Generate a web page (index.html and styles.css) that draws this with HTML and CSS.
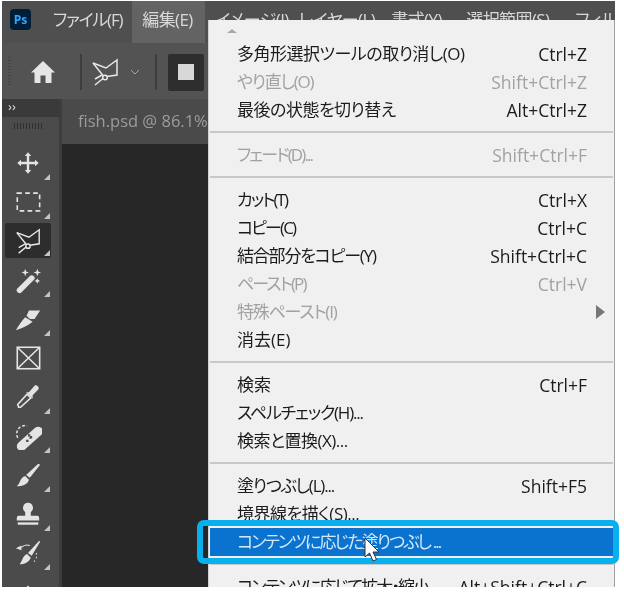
FILE: index.html
```html
<!DOCTYPE html>
<html lang="ja">
<head>
    <meta charset="UTF-8">
    <title>Photoshop 編集メニュー</title>
    <link rel="stylesheet" href="styles.css">
</head>
<body>
<div class="app">
    <div class="menubar">
        <div class="logo">Ps</div>
        <span class="top-item first">ファイル(F)</span>
        <span class="top-item current">編集(E)</span>
        <span class="top-item w-image">イメージ(I)</span>
        <span class="top-item w-layer">レイヤー(L)</span>
        <span class="top-item w-type">書式(Y)</span>
        <span class="top-item w-select">選択範囲(S)</span>
        <span class="top-item">フィルター(T)</span>
    </div>

    <div class="options">
        <div class="grip"></div>
        <svg class="home" viewBox="0 0 24 22"><path d="M12 0 24 11.500H20.500V22H14.500V14.500H9.500V22H3.500V11.500H0Z" fill="#e6e6e6"/></svg>
        <div class="opt-sep"></div>
        <svg class="opt-lasso" viewBox="0 0 30 30"><use href="#lasso"/></svg>
        <svg class="chevron" viewBox="0 0 10 6"><path d="M1 1 5 5 9 1" fill="none" stroke="#a8a8a8" stroke-width="1"/></svg>
        <div class="opt-sep second"></div>
        <div class="mode"><div class="mode-square"></div></div>
    </div>

    <div class="work">
        <div class="tools">
            <div class="tools-head">&rsaquo;&rsaquo;</div>
            <div class="tools-grip"></div>
            <div class="tool corner">
                <svg viewBox="0 0 30 30"><path d="M15 3.500 18.500 7.500H16.300V13.700H22.500V11.500L26.500 15 22.500 18.500V16.300H16.300V22.500H18.500L15 26.500 11.500 22.500H13.700V16.300H7.500V18.500L3.500 15 7.500 11.500V13.700H13.700V7.500H11.500Z" fill="#e4e4e4"/></svg>
            </div>
            <div class="tool corner">
                <svg viewBox="0 0 30 30"><rect x="3.500" y="5.500" width="24" height="19" fill="none" stroke="#e4e4e4" stroke-width="1.700" stroke-dasharray="5 3.500"/></svg>
            </div>
            <div class="tool corner selected">
                <svg viewBox="0 0 30 30">
                    <defs>
                        <g id="lasso" fill="none" stroke="#e8e8e8" stroke-width="1.500">
                            <path d="M3 6 16 11 27 3V18L17 19.500"/>
                            <path d="M3 6 13 18.500"/>
                            <circle cx="15" cy="20.500" r="2.300"/>
                            <path d="M13 21.500 5 28M12 18 5 22"/>
                        </g>
                    </defs>
                    <use href="#lasso"/>
                </svg>
            </div>
            <div class="tool corner">
                <svg viewBox="0 0 30 30" fill="#e4e4e4">
                    <path d="M6 26 19 13" stroke="#e4e4e4" stroke-width="6" stroke-linecap="round"/>
                    <path d="M12 3 13 6 16 7 13 8 12 11 11 8 8 7 11 6ZM25 3 26 6 29 7 26 8 25 11 24 8 21 7 24 6ZM25 13 26 15 28 16 26 17 25 19 24 17 22 16 24 15Z"/>
                </svg>
            </div>
            <div class="tool corner">
                <svg viewBox="0 0 30 30" fill="#e4e4e4"><path d="M16 6H28L22 15 17 15 13.500 11.500ZM12 13 20 18C14 23 8 25 2 27 5 22 8 17 12 13Z"/></svg>
            </div>
            <div class="tool">
                <svg viewBox="0 0 30 30" fill="none" stroke="#e4e4e4" stroke-width="1.700"><rect x="3.500" y="3.500" width="24" height="23"/><path d="M3.500 3.500 27.500 26.500M27.500 3.500 3.500 26.500"/></svg>
            </div>
            <div class="tool corner">
                <svg viewBox="0 0 30 30">
                    <path d="M5 26 4 23 14 12 18 16 7 26Z" fill="none" stroke="#e4e4e4" stroke-width="1.700"/>
                    <path d="M13 10 16 10 22 3C24 1 28 5 26 7L20 13 20 17Z" fill="#e4e4e4"/>
                </svg>
            </div>
            <div class="tool corner">
                <svg viewBox="0 0 30 30">
                    <path d="M8 26 26 10" stroke="#e4e4e4" stroke-width="10" stroke-linecap="round"/>
                    <path d="M13 19h2.500v2.500H13zM17 15h2.500v2.500H17zM15 13h2.500v2.500H15zM19 18h-2.500v-2" fill="#4a4a4a"/>
                    <path d="M4 17A9 9 0 0 1 14 4" fill="none" stroke="#e4e4e4" stroke-width="1.600" stroke-dasharray="3 2"/>
                </svg>
            </div>
            <div class="tool corner">
                <svg viewBox="0 0 30 30" fill="#e4e4e4"><path d="M26 3 28 4 17 18 13 15Z"/><path d="M12 16 16 20C15 25 9 27 3 27 7 24 6 18 12 16Z"/></svg>
            </div>
            <div class="tool corner">
                <svg viewBox="0 0 30 30" fill="#e4e4e4"><path d="M15 3A5.500 5.500 0 0 1 18 13V17H25C27 17 27 19 27 22H3C3 19 3 17 5 17H12V13A5.500 5.500 0 0 1 15 3Z"/><rect x="4" y="24" width="22" height="2.500"/></svg>
            </div>
            <div class="tool corner">
                <svg viewBox="0 0 30 30" fill="#e4e4e4">
                    <path d="M27 2 28 3 19 18 15 15Z"/>
                    <path d="M14 16 18 20C16 25 11 27 6 27 9 24 9 18 14 16Z"/>
                    <path d="M2 10 8 7 8 12Z"/>
                    <path d="M8 9C11 6 14 6 17 7" fill="none" stroke="#e4e4e4" stroke-width="1.200"/>
                    <path d="M24 15v1.500M24 19v1.500M22 23v1.500" stroke="#e4e4e4" stroke-width="1.200"/>
                </svg>
            </div>
            <div class="tool">
                <svg viewBox="0 0 30 30" fill="#e4e4e4"><path d="M15 8 27 20H3Z"/></svg>
            </div>
        </div>
        <div class="document">
            <div class="doc-tab">fish.psd @ 86.1%</div>
            <div class="canvas"></div>
        </div>
    </div>

    <div class="menu">
        <div class="scroll-up"></div>
        <div class="row"><span class="label">多角形選択ツールの取り消し(O)</span><span class="keys">Ctrl+Z</span></div>
        <div class="row off"><span class="label tight">やり直し(O)</span><span class="keys">Shift+Ctrl+Z</span></div>
        <div class="row"><span class="label">最後の状態を切り替え</span><span class="keys">Alt+Ctrl+Z</span></div>
        <div class="sep"></div>
        <div class="row off"><span class="label tighter">フェード(D)...</span><span class="keys">Shift+Ctrl+F</span></div>
        <div class="sep"></div>
        <div class="row"><span class="label tighter">カット(T)</span><span class="keys">Ctrl+X</span></div>
        <div class="row"><span class="label tighter">コピー(C)</span><span class="keys">Ctrl+C</span></div>
        <div class="row"><span class="label tight">結合部分をコピー(Y)</span><span class="keys">Shift+Ctrl+C</span></div>
        <div class="row off"><span class="label tighter">ペースト(P)</span><span class="keys">Ctrl+V</span></div>
        <div class="row off"><span class="label tight">特殊ペースト(I)</span><span class="sub-arrow"></span></div>
        <div class="row"><span class="label wide">消去(E)</span></div>
        <div class="sep"></div>
        <div class="row"><span class="label wide">検索</span><span class="keys">Ctrl+F</span></div>
        <div class="row"><span class="label tight">スペルチェック(H)...</span></div>
        <div class="row"><span class="label">検索と置換(X)...</span></div>
        <div class="sep"></div>
        <div class="row"><span class="label tight">塗りつぶし(L)...</span><span class="keys">Shift+F5</span></div>
        <div class="row"><span class="label">境界線を描く(S)...</span></div>
        <div class="row hot"><span class="label tighter">コンテンツに応じた塗りつぶし ...</span></div>
        <div class="sep"></div>
        <div class="row"><span class="label tighter">コンテンツに応じて拡大・縮小</span><span class="keys">Alt+Shift+Ctrl+C</span></div>
    </div>

    <div class="ring"></div>
    <svg class="cursor" viewBox="0 0 18 26"><path d="M1 1V20L5.500 16 9 24 12.500 22.500 9 15H15Z" fill="#fff" stroke="#333" stroke-width="1"/></svg>
</div>
</body>
</html>
```

FILE: styles.css
```css
* {
    margin: 0;
    padding: 0;
    box-sizing: border-box;
}

body {
    background-color: #fff;
    font-family: "Open Sans", "Noto Sans CJK JP", sans-serif;
    font-feature-settings: "palt";
}

.app {
    position: relative;
    width: 613px;
    height: 586px;
    margin: 1px 0 0 2px;
    background-color: #535353;
    filter: blur(.35px);
}

/* top menu */
.menubar {
    display: flex;
    align-items: flex-start;
    height: 42px;
    background-color: #4f4f4f;
    overflow: hidden;
    white-space: nowrap;
}

.logo {
    flex: none;
    width: 21px;
    height: 21px;
    margin: 8px 0 0 8px;
    border-radius: 4px;
    background-color: #001e36;
    color: #31a8ff;
    font-size: 12px;
    font-weight: 700;
    line-height: 21px;
    text-align: center;
}

.top-item {
    flex: none;
    height: 42px;
    padding: 0 10px;
    color: #d8d8d8;
    font-size: 17px;
    letter-spacing: -.6px;
    line-height: 37px;
}

.top-item.first {
    margin-left: 12px;
    letter-spacing: -1.2px;
}

.top-item.current {
    width: 73px;
    background-color: #636363;
}

.w-image { width: 83px; }
.w-layer { width: 93px; }
.w-type { width: 75px; }
.w-select { width: 109px; }

/* options bar */
.options {
    display: flex;
    align-items: center;
    height: 52px;
    margin-top: 3px;
    background-color: #535353;
}

.grip {
    width: 3px;
    height: 30px;
    margin-left: 6px;
    background-image: repeating-linear-gradient(#444 0 1px, transparent 1px 3px);
}

.home {
    width: 24px;
    height: 22px;
    margin-left: 20px;
}

.opt-sep {
    width: 2px;
    height: 36px;
    margin-left: 25px;
    background-color: #3d3d3d;
}

.opt-sep.second {
    margin-left: 15px;
}

.opt-lasso {
    width: 30px;
    height: 30px;
    margin-left: 8px;
}

.chevron {
    width: 10px;
    height: 6px;
    margin-left: 10px;
}

.mode {
    display: flex;
    align-items: center;
    justify-content: center;
    width: 36px;
    height: 37px;
    margin-left: 11px;
    border-radius: 2px;
    background-color: #2e2e2e;
}

.mode-square {
    width: 16px;
    height: 16px;
    background-color: #d8d8d8;
}

/* tools + document */
.work {
    display: flex;
    height: 489px;
    margin-top: 1px;
}

.tools {
    width: 60px;
    overflow: hidden;
    background-color: #4b4b4b;
    border-right: 3px solid #3d3d3d;
}

.tools-head {
    height: 18px;
    padding-left: 6px;
    background-color: #3a3a3a;
    color: #ddd;
    font-size: 13px;
    line-height: 14px;
}

.tools-grip {
    width: 30px;
    height: 6px;
    margin: 6px 0 14px 12px;
    background-image: repeating-linear-gradient(90deg, #2f2f2f 0 1px, transparent 1px 3px);
}

.tool {
    position: relative;
    display: flex;
    align-items: center;
    justify-content: center;
    width: 46px;
    height: 39px;
    margin-left: 3px;
}

.tool svg {
    width: 28px;
    height: 28px;
}

.tool.corner::after {
    content: "";
    position: absolute;
    right: 1px;
    bottom: 2px;
    border-style: solid;
    border-width: 0 0 6px 6px;
    border-color: transparent transparent #c4c4c4 transparent;
}

.tool.selected {
    height: 35px;
    margin-top: 2px;
    margin-bottom: 2px;
    background-color: #2d2d2d;
    border-radius: 2px;
}

.document {
    flex: 1;
    display: flex;
    flex-direction: column;
}

.doc-tab {
    height: 45px;
    padding-left: 16px;
    background-color: #4a4a4a;
    color: #9c9c9c;
    font-size: 16.500px;
    line-height: 43px;
    white-space: nowrap;
}

.canvas {
    flex: 1;
    background-color: #272727;
}

/* edit menu */
.menu {
    position: absolute;
    left: 206px;
    top: 19px;
    width: 407px;
    height: 567px;
    overflow: hidden;
    padding: 20px 1px 0 1px;
    background-color: #f0f0f0;
    border-left: 1px solid #d0d0d0;
    border-right: 1px solid #a0a0a0;
    color: #1c1c1c;
}

.scroll-up {
    position: absolute;
    left: 18px;
    top: 9px;
    border-style: solid;
    border-width: 0 5px 4px 5px;
    border-color: transparent transparent #a8a8a8 transparent;
}

.row {
    display: flex;
    align-items: center;
    justify-content: space-between;
    height: 28px;
    padding: 0 26px 0 27px;
    white-space: nowrap;
}

.label {
    font-size: 17px;
    line-height: 26px;
    letter-spacing: -.5px;
}

.label.wide { letter-spacing: 0; }
.label.tight { letter-spacing: -1.200px; }
.label.tighter { letter-spacing: -1.900px; }

.keys {
    font-size: 17.500px;
    line-height: 26px;
}

.row.off {
    color: #a2a2a2;
}

.row.hot {
    background-color: #0a72cf;
    color: #d3e8f9;
}

.sep {
    height: 2px;
    margin: 7px 0 8px;
    background-color: #c8c8c8;
}

.sub-arrow {
    margin-right: -18px;
    border-style: solid;
    border-width: 7px 0 7px 9px;
    border-color: transparent transparent transparent #777;
}

/* callout round the highlighted row */
.ring {
    position: absolute;
    left: 195px;
    top: 519px;
    width: 422px;
    height: 44px;
    border: 6px solid #0ab0ee;
    border-radius: 7px;
}

.cursor {
    position: absolute;
    left: 362px;
    top: 536px;
    width: 18px;
    height: 26px;
}
```
